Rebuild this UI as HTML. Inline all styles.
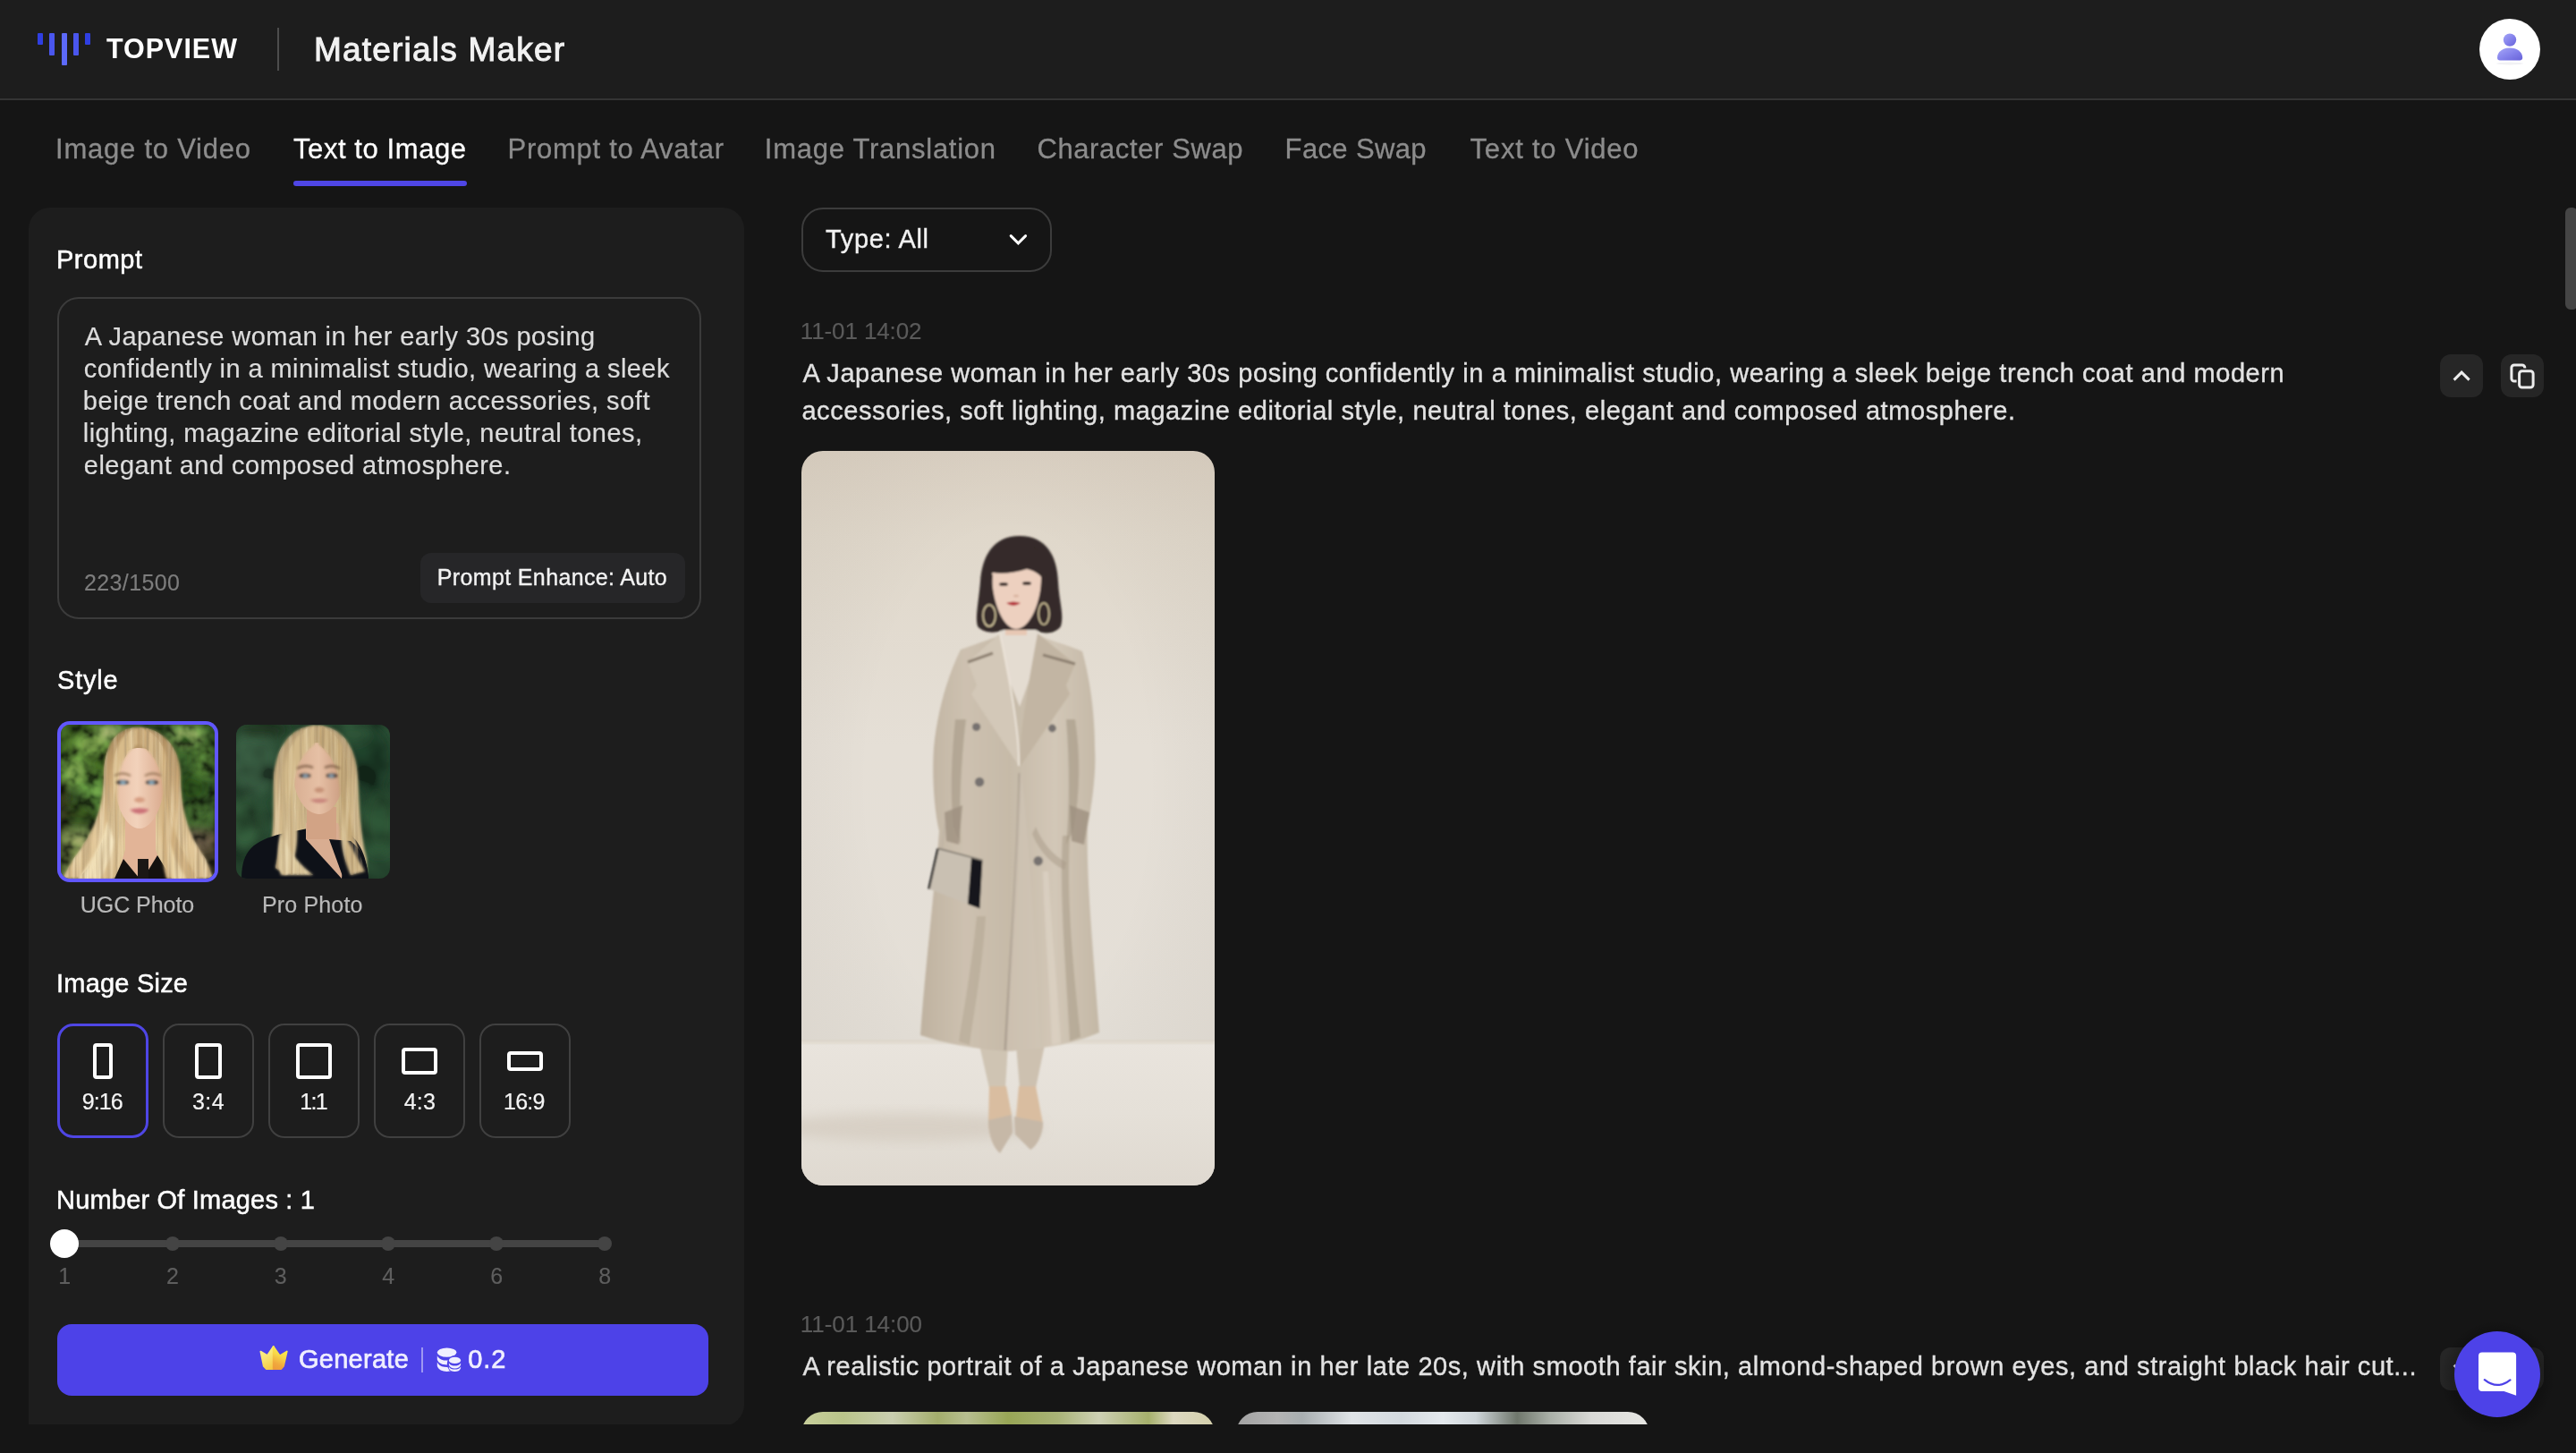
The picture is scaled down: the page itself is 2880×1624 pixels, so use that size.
<!DOCTYPE html>
<html><head><meta charset="utf-8"><title>Materials Maker</title>
<style>
html,body{margin:0;padding:0;background:#151515;}
body{width:2880px;height:1624px;font-family:"Liberation Sans",sans-serif;}
#root{position:relative;width:2880px;height:1624px;overflow:hidden;background:#151515;}
.a{position:absolute;box-sizing:border-box;}
.t{position:absolute;white-space:nowrap;font-family:"Liberation Sans",sans-serif;}
svg{position:absolute;overflow:visible;}
#root{will-change:transform;}

</style></head>
<body>
<div id="root">
<!-- header -->
<div class="a" style="left:0;top:0;width:2880px;height:110px;background:#1d1d1d;"></div>
<div class="a" style="left:0;top:110px;width:2880px;height:2px;background:#343434;"></div>
<!-- logo bars -->
<div class="a" style="left:42px;top:37px;width:6px;height:13px;background:#2f3fe2;border-radius:1px;"></div>
<div class="a" style="left:55px;top:37px;width:6px;height:25px;background:#4a56ee;border-radius:1px;"></div>
<div class="a" style="left:68.5px;top:37px;width:6px;height:36px;background:#5c69fa;border-radius:1px;"></div>
<div class="a" style="left:82px;top:37px;width:6px;height:25px;background:#4a56ee;border-radius:1px;"></div>
<div class="a" style="left:95px;top:37px;width:6px;height:13px;background:#2f3fe2;border-radius:1px;"></div>
<div class="a" style="left:310px;top:31px;width:2px;height:48px;background:#4d4d4d;"></div>
<!-- avatar -->
<div class="a" style="left:2772px;top:21px;width:68px;height:68px;border-radius:50%;background:#ffffff;"></div>
<!-- tab underline -->
<div class="a" style="left:328px;top:202px;width:194px;height:6px;border-radius:3px;background:#4f46e5;"></div>
<!-- left panel -->
<div class="a" style="left:32px;top:232px;width:800px;height:1360px;overflow:hidden;"><div class="a" style="left:0;top:0;width:800px;height:1362px;border-radius:24px 24px 24px 0;background:#1d1d1d;"></div></div>
<!-- prompt box -->
<div class="a" style="left:64px;top:332px;width:720px;height:360px;border-radius:24px;border:2px solid #3b3b3b;"></div>
<div class="a" style="left:470px;top:618px;width:296px;height:56px;border-radius:12px;background:#262628;"></div>
<!-- size boxes -->
<div class="a" style="left:64px;top:1144px;width:102px;height:128px;border-radius:18px;border:3px solid #4f46e5;"></div>
<div class="a" style="left:182px;top:1144px;width:102px;height:128px;border-radius:18px;border:2px solid #404040;"></div>
<div class="a" style="left:300px;top:1144px;width:102px;height:128px;border-radius:18px;border:2px solid #404040;"></div>
<div class="a" style="left:418px;top:1144px;width:102px;height:128px;border-radius:18px;border:2px solid #404040;"></div>
<div class="a" style="left:536px;top:1144px;width:102px;height:128px;border-radius:18px;border:2px solid #404040;"></div>
<!-- size icons -->
<div class="a" style="left:104px;top:1166px;width:22px;height:40px;border-radius:4px;border:4px solid #fff;"></div>
<div class="a" style="left:218px;top:1166px;width:30px;height:40px;border-radius:4px;border:4px solid #fff;"></div>
<div class="a" style="left:331px;top:1166px;width:40px;height:40px;border-radius:4px;border:4px solid #fff;"></div>
<div class="a" style="left:449px;top:1171px;width:40px;height:30px;border-radius:4px;border:4px solid #fff;"></div>
<div class="a" style="left:567px;top:1175px;width:40px;height:22px;border-radius:4px;border:4px solid #fff;"></div>
<!-- slider -->
<div class="a" style="left:72px;top:1386px;width:604px;height:8px;background:#444;"></div>
<div class="a" style="left:185px;top:1382px;width:16px;height:16px;border-radius:50%;background:#444;"></div>
<div class="a" style="left:305.6px;top:1382px;width:16px;height:16px;border-radius:50%;background:#444;"></div>
<div class="a" style="left:426.4px;top:1382px;width:16px;height:16px;border-radius:50%;background:#444;"></div>
<div class="a" style="left:547.2px;top:1382px;width:16px;height:16px;border-radius:50%;background:#444;"></div>
<div class="a" style="left:668px;top:1382px;width:16px;height:16px;border-radius:50%;background:#444;"></div>
<div class="a" style="left:56px;top:1374px;width:32px;height:32px;border-radius:50%;background:#fff;"></div>
<!-- generate -->
<div class="a" style="left:64px;top:1480px;width:728px;height:80px;border-radius:16px;background:#4d42e8;"></div>
<div class="a" style="left:471px;top:1506px;width:2px;height:28px;background:rgba(255,255,255,.45);"></div>
<!-- dropdown -->
<div class="a" style="left:896px;top:232px;width:280px;height:72px;border-radius:24px;border:2px solid #3c3c3c;"></div>
<!-- action buttons -->
<div class="a" style="left:2728px;top:396px;width:48px;height:48px;border-radius:12px;background:#262626;"></div>
<div class="a" style="left:2796px;top:396px;width:48px;height:48px;border-radius:12px;background:#262626;"></div>
<div class="a" style="left:2728px;top:1506px;width:48px;height:48px;border-radius:12px;background:#262626;"></div>
<div class="a" style="left:2796px;top:1506px;width:48px;height:48px;border-radius:12px;background:#262626;"></div>
<!-- scrollbar -->
<div class="a" style="left:2868px;top:232px;width:14px;height:114px;border-radius:6px;background:#454545;"></div>

<!-- UGC thumb -->
<div class="a" style="left:64px;top:806px;width:180px;height:180px;border-radius:14px;background:#6157ff;"></div>
<svg width="172" height="172" viewBox="0 0 172 172" style="left:68px;top:810px;border-radius:10px;overflow:hidden">
<defs>
<filter id="b6" x="-20%" y="-20%" width="140%" height="140%"><feGaussianBlur stdDeviation="6"/></filter>
<filter id="b3" x="-20%" y="-20%" width="140%" height="140%"><feGaussianBlur stdDeviation="3"/></filter>
<filter id="leaf" x="0" y="0" width="100%" height="100%"><feTurbulence type="fractalNoise" baseFrequency="0.075" numOctaves="3" seed="11"/><feColorMatrix type="matrix" values="2.6 0 0 0 -0.85  2.6 0 0 0 -0.85  2.6 0 0 0 -0.85  0 0 0 0 1"/><feGaussianBlur stdDeviation="1.1"/></filter>
<filter id="strand" x="0" y="0" width="100%" height="100%"><feTurbulence type="fractalNoise" baseFrequency="0.22 0.012" numOctaves="2" seed="3"/><feColorMatrix type="matrix" values="0 0 0 0 1  0 0 0 0 0.92  0 0 0 0 0.7  2.4 0 0 0 -0.95"/></filter>
<filter id="strandD" x="0" y="0" width="100%" height="100%"><feTurbulence type="fractalNoise" baseFrequency="0.25 0.012" numOctaves="2" seed="9"/><feColorMatrix type="matrix" values="0 0 0 0 0.42  0 0 0 0 0.3  0 0 0 0 0.16  2.4 0 0 0 -1.0"/></filter>
<filter id="b15" x="-20%" y="-20%" width="140%" height="140%"><feGaussianBlur stdDeviation="1.5"/></filter>
<linearGradient id="hairU" x1="0" y1="0" x2="0" y2="1"><stop offset="0" stop-color="#a8875a"/><stop offset="0.35" stop-color="#c9a777"/><stop offset="0.75" stop-color="#e3c99a"/><stop offset="1" stop-color="#d9bd8e"/></linearGradient>
<linearGradient id="skinU" x1="0" y1="0" x2="1" y2="0"><stop offset="0" stop-color="#e8c0a6"/><stop offset="0.45" stop-color="#f2d2bb"/><stop offset="1" stop-color="#d9a98c"/></linearGradient>
</defs>
<rect width="172" height="172" fill="#2c4420"/>
<g filter="url(#b6)">
<rect x="-10" y="-10" width="70" height="80" fill="#36521f"/>
<ellipse cx="34" cy="22" rx="18" ry="10" fill="#6f9845"/>
<ellipse cx="56" cy="8" rx="14" ry="7" fill="#93b565"/>
<ellipse cx="16" cy="52" rx="14" ry="16" fill="#6d9a45"/>
<ellipse cx="40" cy="75" rx="16" ry="18" fill="#5a8a3a"/>
<ellipse cx="22" cy="100" rx="18" ry="12" fill="#2b4119"/>
<rect x="-5" y="60" width="12" height="120" fill="#2a2614"/>
<rect x="0" y="118" width="50" height="60" fill="#5d6a3a"/>
<ellipse cx="28" cy="128" rx="22" ry="7" fill="#8a9a5c"/>
<rect x="120" y="-10" width="60" height="100" fill="#2f4d20"/>
<ellipse cx="140" cy="12" rx="18" ry="10" fill="#7fa455"/>
<ellipse cx="160" cy="40" rx="10" ry="18" fill="#4d7433"/>
<ellipse cx="148" cy="70" rx="14" ry="16" fill="#243c18"/>
<ellipse cx="155" cy="100" rx="14" ry="12" fill="#3d5e2a"/>
<rect x="130" y="118" width="50" height="60" fill="#3d3627"/>
<ellipse cx="150" cy="128" rx="18" ry="8" fill="#6b5a48"/>
</g>
<rect width="172" height="172" filter="url(#leaf)" opacity=".55" style="mix-blend-mode:overlay"/>
<rect width="172" height="172" fill="#0a1405" opacity=".18"/>
<!-- hair back -->
<path d="M86 3 C58 3 48 28 48 60 C47 92 38 120 14 150 L2 172 H170 L162 150 C140 120 134 90 134 58 C134 26 114 3 86 3 Z" fill="url(#hairU)" filter="url(#b15)"/>
<clipPath id="cUb"><path d="M86 3 C58 3 48 28 48 60 C47 92 38 120 14 150 L2 172 H170 L162 150 C140 120 134 90 134 58 C134 26 114 3 86 3 Z"/></clipPath>
<g clip-path="url(#cUb)"><rect width="172" height="172" filter="url(#strand)" opacity=".38"/><rect width="172" height="172" filter="url(#strandD)" opacity=".75"/></g>
<!-- neck + chest -->
<path d="M72 100 H106 V140 L118 172 H62 L72 140 Z" fill="#e2b497"/>
<path d="M70 150 L88 172 H60 Z" fill="#14110f"/><path d="M108 146 L92 172 H124 Z" fill="#14110f"/>
<rect x="86" y="150" width="12" height="22" fill="#1b1715"/>
<!-- face -->
<path d="M60 62 C60 36 72 26 88 26 C104 26 116 38 116 62 C116 86 104 116 88 116 C72 116 60 88 60 62 Z" fill="url(#skinU)"/>
<!-- hair front strands -->
<path d="M86 4 C66 8 56 30 58 70 C58 100 50 130 30 160 L20 172 H58 C66 150 66 120 64 92 C62 60 66 34 86 22 Z" fill="#d8bb8a" filter="url(#b15)"/>
<path d="M88 4 C110 8 122 30 120 66 C120 100 128 130 146 160 L152 172 H118 C112 150 112 122 114 94 C116 60 110 34 88 22 Z" fill="#cfae7c" filter="url(#b15)"/>
<path d="M20 172 C36 150 46 130 52 108 L60 130 C56 150 50 162 44 172 Z" fill="#f1dfb6" filter="url(#b15)"/>
<path d="M122 130 C126 148 134 160 140 172 H124 C120 158 120 144 122 130 Z" fill="#ead3a4" filter="url(#b15)"/>
<clipPath id="cUf"><path d="M86 4 C66 8 56 30 58 70 C58 100 50 130 30 160 L20 172 H58 C66 150 66 120 64 92 C62 60 66 34 86 22 Z"/><path d="M88 4 C110 8 122 30 120 66 C120 100 128 130 146 160 L152 172 H118 C112 150 112 122 114 94 C116 60 110 34 88 22 Z"/></clipPath>
<g clip-path="url(#cUf)"><rect width="172" height="172" filter="url(#strand)" opacity=".35"/><rect width="172" height="172" filter="url(#strandD)" opacity=".7"/></g>
<!-- features -->
<g filter="url(#b15)" opacity=".95">
<ellipse cx="69" cy="64.5" rx="7" ry="2.6" fill="#2b2420"/><ellipse cx="69.5" cy="64.8" rx="3" ry="2.2" fill="#7fa6bd"/>
<ellipse cx="102" cy="64.5" rx="7" ry="2.6" fill="#2b2420"/><ellipse cx="101.5" cy="64.8" rx="3" ry="2.2" fill="#7fa6bd"/>
<path d="M60 57 Q69 52 78 57" stroke="#8a6a4c" stroke-width="2" fill="none"/>
<path d="M94 57 Q103 52 112 57" stroke="#8a6a4c" stroke-width="2" fill="none"/>
<ellipse cx="88" cy="84" rx="6" ry="3" fill="#d49a7e"/>
<path d="M77 95 Q88 91.5 99 95 Q88 104 77 95 Z" fill="#c86a72"/>
</g>
</svg>
<!-- Pro thumb -->
<svg width="172" height="172" viewBox="0 0 172 172" style="left:264px;top:810px;border-radius:12px;overflow:hidden">
<defs>
<linearGradient id="hairP" x1="0" y1="0" x2="0" y2="1"><stop offset="0" stop-color="#b39a72"/><stop offset="0.4" stop-color="#cdb487"/><stop offset="1" stop-color="#d8c092"/></linearGradient>
<linearGradient id="skinP" x1="0" y1="0" x2="1" y2="0"><stop offset="0" stop-color="#d8ae92"/><stop offset="0.5" stop-color="#e6c0a5"/><stop offset="1" stop-color="#c99a7e"/></linearGradient>
</defs>
<rect width="172" height="172" fill="#24422c"/>
<g filter="url(#b6)">
<ellipse cx="20" cy="40" rx="26" ry="40" fill="#35573c"/>
<ellipse cx="10" cy="110" rx="20" ry="30" fill="#2f5236"/>
<ellipse cx="30" cy="6" rx="30" ry="10" fill="#1a2d1e"/>
<ellipse cx="150" cy="40" rx="26" ry="40" fill="#1f3a26"/>
<ellipse cx="160" cy="110" rx="18" ry="36" fill="#2c4f33"/>
<ellipse cx="130" cy="10" rx="20" ry="12" fill="#2f5538"/>
</g>
<filter id="leaf2" x="0" y="0" width="100%" height="100%"><feTurbulence type="fractalNoise" baseFrequency="0.03" numOctaves="2" seed="5"/><feColorMatrix type="matrix" values="2 0 0 0 -0.55  2 0 0 0 -0.55  2 0 0 0 -0.55  0 0 0 0 1"/></filter>
<rect width="172" height="172" filter="url(#leaf2)" opacity=".35" style="mix-blend-mode:overlay"/><rect width="172" height="172" fill="#08140c" opacity=".15"/>
<!-- hair back -->
<path d="M90 1 C60 1 44 26 42 60 C41 90 44 120 36 150 L46 168 H146 L146 150 C138 120 138 90 136 58 C134 24 118 1 90 1 Z" fill="url(#hairP)" filter="url(#b15)"/>
<clipPath id="cPb"><path d="M90 1 C60 1 44 26 42 60 C41 90 44 120 36 150 L46 168 H146 L146 150 C138 120 138 90 136 58 C134 24 118 1 90 1 Z"/></clipPath>
<g clip-path="url(#cPb)"><rect width="172" height="172" filter="url(#strand)" opacity=".3"/><rect width="172" height="172" filter="url(#strandD)" opacity=".7"/></g>
<!-- blazer -->
<path d="M6 172 C6 140 20 130 50 122 L80 116 H118 C140 128 146 150 148 172 Z" fill="#0e1118"/>
<!-- chest V -->
<path d="M78 110 H114 L122 126 L118 172 L78 128 Z" fill="#d9ad91"/>
<!-- neck -->
<path d="M79 92 H112 V128 H79 Z" fill="#d2a385"/>
<!-- face -->
<path d="M64 56 C64 32 76 20 93 20 C110 20 121 32 121 56 C121 78 108 100 93 100 C78 100 64 80 64 56 Z" fill="url(#skinP)"/>
<!-- hair front -->
<path d="M88 1 C66 6 54 30 54 64 C54 100 50 130 44 160 L56 168 C70 150 70 120 66 92 C62 60 68 36 88 22 Z" fill="#d2b98a" filter="url(#b15)"/>
<path d="M92 1 C114 6 126 30 124 64 C124 100 132 130 144 160 L130 168 C118 150 114 122 116 94 C118 60 112 36 92 22 Z" fill="#c4a877" filter="url(#b15)"/>
<path d="M50 120 C58 140 70 156 86 168 H50 C46 150 46 136 50 120 Z" fill="#dcc79b" filter="url(#b15)"/>
<path d="M104 128 L120 172 H148 C146 150 140 140 128 130 Z" fill="#0e1118"/>
<path d="M118 110 C124 130 136 150 144 164 L128 168 C120 150 116 130 118 110 Z" fill="#cdb383" filter="url(#b15)"/>
<clipPath id="cPf"><path d="M88 1 C66 6 54 30 54 64 C54 100 50 130 44 160 L56 168 C70 150 70 120 66 92 C62 60 68 36 88 22 Z"/><path d="M92 1 C114 6 126 30 124 64 C124 100 132 130 144 160 L130 168 C118 150 114 122 116 94 C118 60 112 36 92 22 Z"/><path d="M50 120 C58 140 70 156 86 168 H50 C46 150 46 136 50 120 Z"/><path d="M118 110 C124 130 136 150 144 164 L128 168 C120 150 116 130 118 110 Z"/></clipPath>
<g clip-path="url(#cPf)"><rect width="172" height="172" filter="url(#strand)" opacity=".3"/><rect width="172" height="172" filter="url(#strandD)" opacity=".65"/></g>
<g filter="url(#b15)" opacity=".95">
<ellipse cx="77" cy="57" rx="6.5" ry="2.4" fill="#3a2e28"/><ellipse cx="77.5" cy="57.2" rx="2.8" ry="2" fill="#7b98ad"/>
<ellipse cx="107" cy="57" rx="6.5" ry="2.4" fill="#3a2e28"/><ellipse cx="106.5" cy="57.2" rx="2.8" ry="2" fill="#7b98ad"/>
<path d="M68 49 Q77 44 86 48" stroke="#7a5c44" stroke-width="2.2" fill="none"/>
<path d="M99 48 Q108 44 116 49" stroke="#7a5c44" stroke-width="2.2" fill="none"/>
<ellipse cx="93" cy="73" rx="5.5" ry="3" fill="#c48f74"/>
<path d="M82 84 Q93 81 104 84 Q93 91 82 84 Z" fill="#c58078"/>
</g>
</svg>

<!-- main image -->
<svg width="462" height="821" viewBox="0 0 462 821" style="left:896px;top:504px;border-radius:24px;overflow:hidden">
<defs>
<linearGradient id="wall" x1="0" y1="0" x2="0" y2="1"><stop offset="0" stop-color="#dbd1c3"/><stop offset="0.12" stop-color="#e0d8cb"/><stop offset="0.4" stop-color="#e5dfd6"/><stop offset="0.8" stop-color="#e4dfd7"/><stop offset="1" stop-color="#e2ddd5"/></linearGradient>
<radialGradient id="wallv" cx="0.5" cy="0.45" r="0.75"><stop offset="0.45" stop-color="#000" stop-opacity="0"/><stop offset="1" stop-color="#6b5a40" stop-opacity="0.07"/></radialGradient>
<linearGradient id="floor" x1="0" y1="0" x2="0" y2="1"><stop offset="0" stop-color="#e9e4dd"/><stop offset="0.5" stop-color="#e5e0d8"/><stop offset="1" stop-color="#dfd9d0"/></linearGradient>
<linearGradient id="coat" x1="0" y1="0" x2="1" y2="0"><stop offset="0" stop-color="#bfb2a0"/><stop offset="0.25" stop-color="#cdc1b0"/><stop offset="0.5" stop-color="#c6baa8"/><stop offset="0.75" stop-color="#d2c7b7"/><stop offset="1" stop-color="#c4b8a6"/></linearGradient>
<filter id="m2" x="-10%" y="-10%" width="120%" height="120%"><feGaussianBlur stdDeviation="1.2"/></filter>
<filter id="m6" x="-30%" y="-30%" width="160%" height="160%"><feGaussianBlur stdDeviation="7"/></filter>
</defs>
<rect width="462" height="821" fill="url(#wall)"/>
<rect width="462" height="821" fill="url(#wallv)"/>
<rect x="0" y="660" width="462" height="161" fill="url(#floor)"/>
<rect x="0" y="658" width="462" height="5" fill="#ddd5c8" opacity=".6" filter="url(#m2)"/>
<!-- floor shadow -->
<ellipse cx="120" cy="756" rx="150" ry="16" fill="#cfc5b8" opacity=".55" filter="url(#m6)"/>
<g filter="url(#m2)">
<!-- legs -->
<path d="M199 664 H231 L228 712 H210 Z" fill="#cfc4b3"/>
<path d="M240 664 H272 L262 712 H244 Z" fill="#cdc1b0"/>
<!-- feet -->
<path d="M210 710 H229 L235 742 L222 784 C216 780 210 768 209 752 Z" fill="#d9bda0"/>
<path d="M243 710 H262 L270 752 C269 766 262 778 256 780 L240 744 Z" fill="#d9bda0"/>
<path d="M209 748 L235 742 L236 762 L222 785 C214 778 209 764 209 748 Z" fill="#c6b8a7"/>
<path d="M238 744 L270 750 C270 766 262 778 256 781 L239 764 Z" fill="#c6b8a7"/>
<!-- coat body -->
<path d="M178 222 C200 214 214 210 226 204 H262 C276 212 296 216 314 224 C324 260 328 300 328 332 C330 360 324 400 320 420 C318 470 326 560 333 650 C300 664 270 668 229 671 C190 668 160 662 133 653 C138 580 150 480 154 425 C148 400 146 360 148 332 C152 290 164 250 178 222 Z" fill="url(#coat)"/>
<!-- arm shading -->
<path d="M172 300 C168 340 166 380 170 420 L178 440 C176 400 178 350 184 300 Z" fill="#a99c8a" opacity=".7"/>
<path d="M306 300 C312 340 312 380 304 424 L296 440 C300 400 300 350 296 300 Z" fill="#a99c8a" opacity=".7"/>
<!-- pocket hands -->
<path d="M160 404 L180 396 L176 440 L162 436 Z" fill="#9d907f" opacity=".8"/>
<path d="M300 396 L322 404 L316 440 L302 436 Z" fill="#9d907f" opacity=".8"/>
<!-- center seam -->
<path d="M244 360 C242 460 234 560 228 670" stroke="#a3978a" stroke-width="3" fill="none" opacity=".8"/>
<path d="M246 360 C256 460 262 560 268 668 L229 671 C234 560 240 460 244 360 Z" fill="#d0c5b5" opacity=".6"/>
<!-- inner top -->
<path d="M222 198 H265 L262 236 L244 286 L226 240 Z" fill="#e4dcd1"/>
<!-- lapels -->
<path d="M222 204 L186 236 L196 262 L190 272 L243 352 C244 320 236 270 222 204 Z" fill="#d3c8b8"/>
<path d="M264 204 L306 238 L296 262 L300 272 L245 352 C242 330 250 280 264 204 Z" fill="#c2b5a3"/>
<path d="M186 236 L214 226" stroke="#8c7f70" stroke-width="3"/>
<path d="M306 238 L270 228" stroke="#8c7f70" stroke-width="3"/>
<path d="M222 204 C236 270 244 320 243 352" stroke="#ece4d9" stroke-width="2" fill="none"/>
<!-- folds -->
<path d="M300 430 C296 500 304 580 312 655 L300 660 C296 580 288 500 292 430 Z" fill="#a79a87" opacity=".55"/>
<path d="M276 470 C280 540 286 600 290 662 L280 664 C278 600 272 540 270 470 Z" fill="#ddd3c4" opacity=".7"/>
<path d="M196 520 C190 580 182 620 176 660 L188 664 C194 620 202 580 206 520 Z" fill="#ad9f8c" opacity=".45"/>
<path d="M262 420 C270 440 282 452 296 460 L294 468 C280 462 266 448 258 428 Z" fill="#a79a87" opacity=".5"/>
<!-- buttons -->
<circle cx="195.6" cy="308.5" r="4.6" fill="#77726f"/><circle cx="280.4" cy="310" r="4.4" fill="#77726f"/>
<circle cx="199.1" cy="370" r="5.2" fill="#77726f"/><circle cx="264.7" cy="458.3" r="5.2" fill="#77726f"/>
<!-- bag strap -->
<path d="M160 416 L157 446" stroke="#bfb4a4" stroke-width="2"/>
<!-- bag -->
<path d="M152.6 444.3 L202.4 457.4 L199.4 511.5 L142.4 489.6 Z" fill="#c9c0b2"/>
<path d="M190 454.2 L202.4 457.4 L199.4 511.5 L186 506.4 Z" fill="#17181a"/>
<path d="M152.6 444.3 L142.4 489.6" stroke="#222" stroke-width="2.5"/>
<path d="M152.6 444.3 L202.4 457.4" stroke="#8a8378" stroke-width="2"/>
<!-- neck -->
<path d="M228 188 H252 V206 H228 Z" fill="#e7c8b4"/>
<!-- hair back -->
<path d="M244 95 C214 95 202 118 200 146 C198 170 194 186 197 196 C204 204 216 204 226 200 L262 200 C272 206 284 204 290 196 C294 184 288 168 287 146 C286 118 274 95 244 95 Z" fill="#342c29"/>
<!-- face -->
<path d="M213 138 C213 124 226 120 240 120 C256 120 268 126 268 142 C268 168 256 199 240 199 C226 199 213 170 213 138 Z" fill="#edd0bf"/>
<!-- bangs -->
<path d="M208 150 C206 120 222 104 244 104 C266 104 278 120 274 150 C270 140 262 134 252 132 C240 136 224 138 214 136 C210 140 209 146 208 150 Z" fill="#342c29"/>
<!-- side hair -->
<path d="M206 140 C200 160 198 184 200 196 C208 202 218 202 222 196 C214 180 212 160 214 138 Z" fill="#342c29"/>
<path d="M276 140 C284 160 290 180 288 196 C282 204 268 204 262 198 C270 180 272 160 270 138 Z" fill="#342c29"/>
<!-- earrings -->
<ellipse cx="210" cy="184" rx="7" ry="12" fill="none" stroke="#d8c9a0" stroke-width="1.6"/>
<ellipse cx="271" cy="182" rx="6" ry="12" fill="none" stroke="#d8c9a0" stroke-width="1.6"/>
<!-- features -->
<path d="M229 170 Q237 167 245 170 Q237 176 229 170 Z" fill="#b5323a"/>
<ellipse cx="226" cy="149" rx="5" ry="2" fill="#3a2e2a"/><ellipse cx="252" cy="148" rx="5" ry="2" fill="#3a2e2a"/><ellipse cx="240" cy="162" rx="3" ry="1.5" fill="#d9b4a0"/>
</g>
</svg>
<!-- bottom clipped images -->
<div class="a" style="left:896px;top:1578px;width:1000px;height:14px;overflow:hidden;">
<div class="a" style="left:0;top:0;width:462px;height:100px;border-radius:24px;background:linear-gradient(90deg,#c8cf9c 0%,#b9c48a 10%,#c9ceb0 22%,#a3ad6c 33%,#b7be90 40%,#98a656 50%,#a9b377 62%,#cdd0b4 72%,#a6b06c 84%,#dcd8c0 90%,#d4d0ac 100%);"></div>
<div class="a" style="left:486px;top:0;width:462px;height:100px;border-radius:24px;background:linear-gradient(90deg,#a2a2a2 0%,#b4b4b4 10%,#a8aeb0 16%,#dfe3e6 28%,#d3d9de 40%,#e4e9ed 50%,#cfd6da 58%,#6f776c 68%,#aab0a8 76%,#d9d9d6 86%,#e6e6e3 100%);"></div>
</div>

<svg width="2880" height="1624" viewBox="0 0 2880 1624" style="left:0;top:0">
<defs>
<linearGradient id="gav" x1="0" y1="0" x2="1" y2="1"><stop offset="0" stop-color="#a6a7f7"/><stop offset="0.5" stop-color="#8583ec"/><stop offset="1" stop-color="#6762d8"/></linearGradient>
<linearGradient id="gcl" gradientUnits="userSpaceOnUse" x1="292" y1="1508" x2="304" y2="1531"><stop offset="0" stop-color="#fdf38c"/><stop offset="0.5" stop-color="#f8e06a"/><stop offset="1" stop-color="#f5c640"/></linearGradient>
<linearGradient id="gcr" gradientUnits="userSpaceOnUse" x1="317" y1="1508" x2="307" y2="1530"><stop offset="0" stop-color="#fdec50"/><stop offset="0.35" stop-color="#f8d648"/><stop offset="0.75" stop-color="#f0a83e"/><stop offset="1" stop-color="#ee9c3a"/></linearGradient>
<radialGradient id="gsh" cx="0.5" cy="0.5" r="0.5"><stop offset="0.8" stop-color="#000" stop-opacity="0.18"/><stop offset="1" stop-color="#000" stop-opacity="0"/></radialGradient>
</defs>
<!-- avatar person -->
<ellipse cx="2806" cy="71" rx="15" ry="1.4" fill="#f1f1f4"/>
<circle cx="2806" cy="44.6" r="7.2" fill="url(#gav)"/>
<path d="M2792 64.5 C2792 58 2798 53.5 2806 53.5 C2814 53.5 2820.2 58 2820.2 64.5 C2820.2 66.3 2819 67.6 2817 67.6 H2795 C2793 67.6 2792 66.3 2792 64.5 Z" fill="url(#gav)"/>
<!-- dropdown chevron -->
<path d="M1130.2 263.6 L1138.4 271.8 L1146.6 263.6" fill="none" stroke="#ffffff" stroke-width="3" stroke-linecap="round" stroke-linejoin="miter"/>
<!-- chevron up -->
<path d="M2743.6 424.6 L2752.1 416.1 L2760.6 424.6" fill="none" stroke="#ececec" stroke-width="3" stroke-linecap="butt" stroke-linejoin="miter"/>
<!-- copy icon -->
<path d="M2822.8 411.6 V410.9 a3 3 0 0 0 -3 -3 H2810.9 a3 3 0 0 0 -3 3 V423.1 a3 3 0 0 0 3 3 H2813.6" fill="none" stroke="#ececec" stroke-width="3"/>
<rect x="2816.6" y="414.7" width="15.5" height="18.4" rx="3" fill="none" stroke="#ececec" stroke-width="3"/>
<!-- second row: chevron down + copy (mostly hidden) -->
<path d="M2743.6 1525.7 L2752.1 1534.2 L2760.6 1525.7" fill="none" stroke="#ececec" stroke-width="3"/>
<path d="M2822.8 1521.6 V1520.9 a3 3 0 0 0 -3 -3 H2810.9 a3 3 0 0 0 -3 3 V1533.1 a3 3 0 0 0 3 3 H2813.6" fill="none" stroke="#ececec" stroke-width="3"/>
<rect x="2816.6" y="1524.7" width="15.5" height="18.4" rx="3" fill="none" stroke="#ececec" stroke-width="3"/>
<!-- chat button -->
<circle cx="2792" cy="1540" r="64" fill="url(#gsh)"/>
<circle cx="2792" cy="1536" r="48" fill="#4d42e8"/>
<path d="M2775 1511.6 H2809.1 a4 4 0 0 1 4 4 V1559.8 L2799.5 1555 H2775 a4 4 0 0 1 -4 -4 V1515.6 a4 4 0 0 1 4 -4 Z" fill="#ffffff"/>
<path d="M2777.8 1542.2 Q2792 1553.6 2806.4 1542.4" fill="none" stroke="#4d42e8" stroke-width="2.2" stroke-linecap="round"/>
<!-- crown -->
<g stroke-linejoin="round" stroke-width="1.8">
<path d="M291.4 1510.6 L298.9 1515 L305.7 1505 V1530 H297.6 L294.8 1527 Z" fill="url(#gcl)" stroke="url(#gcl)"/>
<path d="M305.7 1505 L312.8 1515.2 L320.8 1510.4 L317 1527 L314.4 1530 H305.7 Z" fill="url(#gcr)" stroke="url(#gcr)"/>
</g>
<!-- coins -->
<g fill="#f0efff">
<ellipse cx="499.6" cy="1511.6" rx="10.8" ry="5.2"/>
<path d="M488.8 1515.2 C491 1519.4 495 1520.6 499.6 1520.6 C504.2 1520.6 508.2 1519.4 510.4 1515.2 V1519.4 C509 1523.6 504.6 1525.4 499.6 1525.4 C494.6 1525.4 490.2 1523.6 488.8 1519.4 Z"/>
<path d="M488.8 1522.6 C491 1526.8 495 1528 499.6 1528 C504.2 1528 508.2 1526.8 510.4 1522.6 V1526.8 C509 1531 504.6 1532.9 499.6 1532.9 C494.6 1532.9 490.2 1531 488.8 1526.8 Z"/>
</g>
<ellipse cx="508.4" cy="1524.6" rx="8.6" ry="9.6" fill="#4d42e8"/>
<g fill="#f0efff">
<ellipse cx="508.5" cy="1520.4" rx="6.6" ry="3.6"/>
<path d="M501.9 1523.2 C503 1525.8 505.6 1526.6 508.5 1526.6 C511.4 1526.6 514 1525.8 515.1 1523.2 V1525.4 C514.2 1528.2 511.6 1529.4 508.5 1529.4 C505.4 1529.4 502.8 1528.2 501.9 1525.4 Z"/>
<path d="M501.9 1527.4 C503 1530 505.6 1530.6 508.5 1530.6 C511.4 1530.6 514 1530 515.1 1527.4 V1529.2 C514.2 1532 511.6 1533 508.5 1533 C505.4 1533 502.8 1532 501.9 1529.2 Z"/>
</g>
</svg>

<div class="t" id="logo" style="left:119.0px;top:38.7px;font-size:30.5px;line-height:30.5px;color:#ffffff;font-weight:700;letter-spacing:0.982px;">TOPVIEW</div>
<div class="t" id="title" style="left:351.0px;top:36.9px;font-size:37px;line-height:37px;color:#f2f2f2;font-weight:400;letter-spacing:1.201px;-webkit-text-stroke:1.0px;">Materials Maker</div>
<div class="t" id="tab1" style="left:62.0px;top:150.8px;font-size:31px;line-height:31px;color:#8c8c8c;font-weight:400;letter-spacing:0.772px;-webkit-text-stroke:0.3px;">Image to Video</div>
<div class="t" id="tab2" style="left:328.0px;top:150.8px;font-size:31px;line-height:31px;color:#ffffff;font-weight:400;letter-spacing:0.576px;-webkit-text-stroke:0.3px;">Text to Image</div>
<div class="t" id="tab3" style="left:567.5px;top:150.8px;font-size:31px;line-height:31px;color:#8c8c8c;font-weight:400;letter-spacing:0.745px;-webkit-text-stroke:0.3px;">Prompt to Avatar</div>
<div class="t" id="tab4" style="left:854.8px;top:150.8px;font-size:31px;line-height:31px;color:#8c8c8c;font-weight:400;letter-spacing:0.742px;-webkit-text-stroke:0.3px;">Image Translation</div>
<div class="t" id="tab5" style="left:1159.4px;top:150.8px;font-size:31px;line-height:31px;color:#8c8c8c;font-weight:400;letter-spacing:0.609px;-webkit-text-stroke:0.3px;">Character Swap</div>
<div class="t" id="tab6" style="left:1436.6px;top:150.8px;font-size:31px;line-height:31px;color:#8c8c8c;font-weight:400;letter-spacing:0.365px;-webkit-text-stroke:0.3px;">Face Swap</div>
<div class="t" id="tab7" style="left:1643.6px;top:150.8px;font-size:31px;line-height:31px;color:#8c8c8c;font-weight:400;letter-spacing:0.777px;-webkit-text-stroke:0.3px;">Text to Video</div>
<div class="t" id="lprompt" style="left:63.0px;top:275.5px;font-size:29px;line-height:29px;color:#ffffff;font-weight:400;letter-spacing:0.503px;-webkit-text-stroke:0.5px;">Prompt</div>
<div class="t" id="p1" style="left:94.8px;top:361.5px;font-size:29px;line-height:29px;color:#dcdcdc;font-weight:400;letter-spacing:0.447px;-webkit-text-stroke:0.2px;">A Japanese woman in her early 30s posing</div>
<div class="t" id="p2" style="left:93.8px;top:397.5px;font-size:29px;line-height:29px;color:#dcdcdc;font-weight:400;letter-spacing:0.423px;-webkit-text-stroke:0.2px;">confidently in a minimalist studio, wearing a sleek</div>
<div class="t" id="p3" style="left:92.8px;top:433.7px;font-size:29px;line-height:29px;color:#dcdcdc;font-weight:400;letter-spacing:0.541px;-webkit-text-stroke:0.2px;">beige trench coat and modern accessories, soft</div>
<div class="t" id="p4" style="left:92.8px;top:469.7px;font-size:29px;line-height:29px;color:#dcdcdc;font-weight:400;letter-spacing:0.455px;-webkit-text-stroke:0.2px;">lighting, magazine editorial style, neutral tones,</div>
<div class="t" id="p5" style="left:93.8px;top:505.7px;font-size:29px;line-height:29px;color:#dcdcdc;font-weight:400;letter-spacing:0.468px;-webkit-text-stroke:0.2px;">elegant and composed atmosphere.</div>
<div class="t" id="count" style="left:94.0px;top:639.1px;font-size:25px;line-height:25px;color:#7d7d7d;font-weight:400;letter-spacing:0.374px;-webkit-text-stroke:0.15px;">223/1500</div>
<div class="t" id="enh" style="left:488.8px;top:632.8px;font-size:25px;line-height:25px;color:#f2f2f2;font-weight:400;letter-spacing:0.359px;-webkit-text-stroke:0.35px;">Prompt Enhance: Auto</div>
<div class="t" id="lstyle" style="left:64.1px;top:746.3px;font-size:29px;line-height:29px;color:#ffffff;font-weight:400;letter-spacing:0.754px;-webkit-text-stroke:0.5px;">Style</div>
<div class="t" id="ugc" style="left:89.8px;top:998.8px;font-size:25px;line-height:25px;color:#b9b9b9;font-weight:400;letter-spacing:-0.055px;-webkit-text-stroke:0.2px;">UGC Photo</div>
<div class="t" id="pro" style="left:293.0px;top:998.8px;font-size:25px;line-height:25px;color:#b9b9b9;font-weight:400;letter-spacing:0.152px;-webkit-text-stroke:0.2px;">Pro Photo</div>
<div class="t" id="lsize" style="left:63.0px;top:1084.5px;font-size:29px;line-height:29px;color:#ffffff;font-weight:400;letter-spacing:0.214px;-webkit-text-stroke:0.5px;">Image Size</div>
<div class="t" id="lnum" style="left:63.0px;top:1326.5px;font-size:29px;line-height:29px;color:#ffffff;font-weight:400;letter-spacing:0.196px;-webkit-text-stroke:0.5px;">Number Of Images : 1</div>
<div class="t" id="gen" style="left:334.0px;top:1505.0px;font-size:29px;line-height:29px;color:#f0efff;font-weight:400;letter-spacing:0.268px;-webkit-text-stroke:0.7px;">Generate</div>
<div class="t" id="cost" style="left:523.2px;top:1505.0px;font-size:29px;line-height:29px;color:#f0efff;font-weight:400;letter-spacing:0.936px;-webkit-text-stroke:0.7px;">0.2</div>
<div class="t" id="type" style="left:923.0px;top:253.3px;font-size:29px;line-height:29px;color:#f2f2f2;font-weight:400;letter-spacing:0.672px;-webkit-text-stroke:0.35px;">Type: All</div>
<div class="t" id="ts1" style="left:894.8px;top:356.5px;font-size:26px;line-height:26px;color:#5a5a5a;font-weight:400;letter-spacing:-0.116px;-webkit-text-stroke:0.15px;">11-01 14:02</div>
<div class="t" id="r1" style="left:897.4px;top:402.5px;font-size:29px;line-height:29px;color:#e2e2e2;font-weight:400;letter-spacing:0.570px;-webkit-text-stroke:0.35px;">A Japanese woman in her early 30s posing confidently in a minimalist studio, wearing a sleek beige trench coat and modern</div>
<div class="t" id="r2" style="left:896.4px;top:444.5px;font-size:29px;line-height:29px;color:#e2e2e2;font-weight:400;letter-spacing:0.589px;-webkit-text-stroke:0.35px;">accessories, soft lighting, magazine editorial style, neutral tones, elegant and composed atmosphere.</div>
<div class="t" id="ts2" style="left:894.8px;top:1466.8px;font-size:26px;line-height:26px;color:#5a5a5a;font-weight:400;letter-spacing:-0.066px;-webkit-text-stroke:0.15px;">11-01 14:00</div>
<div class="t" id="r3" style="left:897.4px;top:1512.5px;font-size:29px;line-height:29px;color:#e2e2e2;font-weight:400;letter-spacing:0.572px;-webkit-text-stroke:0.35px;">A realistic portrait of a Japanese woman in her late 20s, with smooth fair skin, almond-shaped brown eyes, and straight black hair cut...</div>
<div class="t" id="sl0" style="left:72.2px;top:1413.5px;font-size:25px;line-height:25px;color:#5e5e5e;font-weight:400;letter-spacing:0.000px;transform:translateX(-50%);-webkit-text-stroke:0.15px;">1</div>
<div class="t" id="sl1" style="left:192.9px;top:1413.5px;font-size:25px;line-height:25px;color:#5e5e5e;font-weight:400;letter-spacing:0.000px;transform:translateX(-50%);-webkit-text-stroke:0.15px;">2</div>
<div class="t" id="sl2" style="left:313.7px;top:1413.5px;font-size:25px;line-height:25px;color:#5e5e5e;font-weight:400;letter-spacing:0.000px;transform:translateX(-50%);-webkit-text-stroke:0.15px;">3</div>
<div class="t" id="sl3" style="left:434.2px;top:1413.5px;font-size:25px;line-height:25px;color:#5e5e5e;font-weight:400;letter-spacing:0.000px;transform:translateX(-50%);-webkit-text-stroke:0.15px;">4</div>
<div class="t" id="sl4" style="left:555.1px;top:1413.5px;font-size:25px;line-height:25px;color:#5e5e5e;font-weight:400;letter-spacing:0.000px;transform:translateX(-50%);-webkit-text-stroke:0.15px;">6</div>
<div class="t" id="sl5" style="left:676.1px;top:1413.5px;font-size:25px;line-height:25px;color:#5e5e5e;font-weight:400;letter-spacing:0.000px;transform:translateX(-50%);-webkit-text-stroke:0.15px;">8</div>
<div class="t" id="s1" style="left:91.8px;top:1219.1px;font-size:25px;line-height:25px;color:#f5f5f5;font-weight:400;letter-spacing:-0.957px;-webkit-text-stroke:0.2px;">9:16</div>
<div class="t" id="s2" style="left:215.0px;top:1219.1px;font-size:25px;line-height:25px;color:#f5f5f5;font-weight:400;letter-spacing:0.417px;-webkit-text-stroke:0.2px;">3:4</div>
<div class="t" id="s3" style="left:350.2px;top:1219.1px;font-size:25px;line-height:25px;color:#f5f5f5;font-weight:400;letter-spacing:0.000px;transform:translateX(-50%);letter-spacing:-1.6px;-webkit-text-stroke:0.2px;">1:1</div>
<div class="t" id="s4" style="left:451.8px;top:1219.1px;font-size:25px;line-height:25px;color:#f5f5f5;font-weight:400;letter-spacing:0.167px;-webkit-text-stroke:0.2px;">4:3</div>
<div class="t" id="s5" style="left:563.1px;top:1219.1px;font-size:25px;line-height:25px;color:#f5f5f5;font-weight:400;letter-spacing:-0.791px;-webkit-text-stroke:0.2px;">16:9</div>
</div>
</body></html>
